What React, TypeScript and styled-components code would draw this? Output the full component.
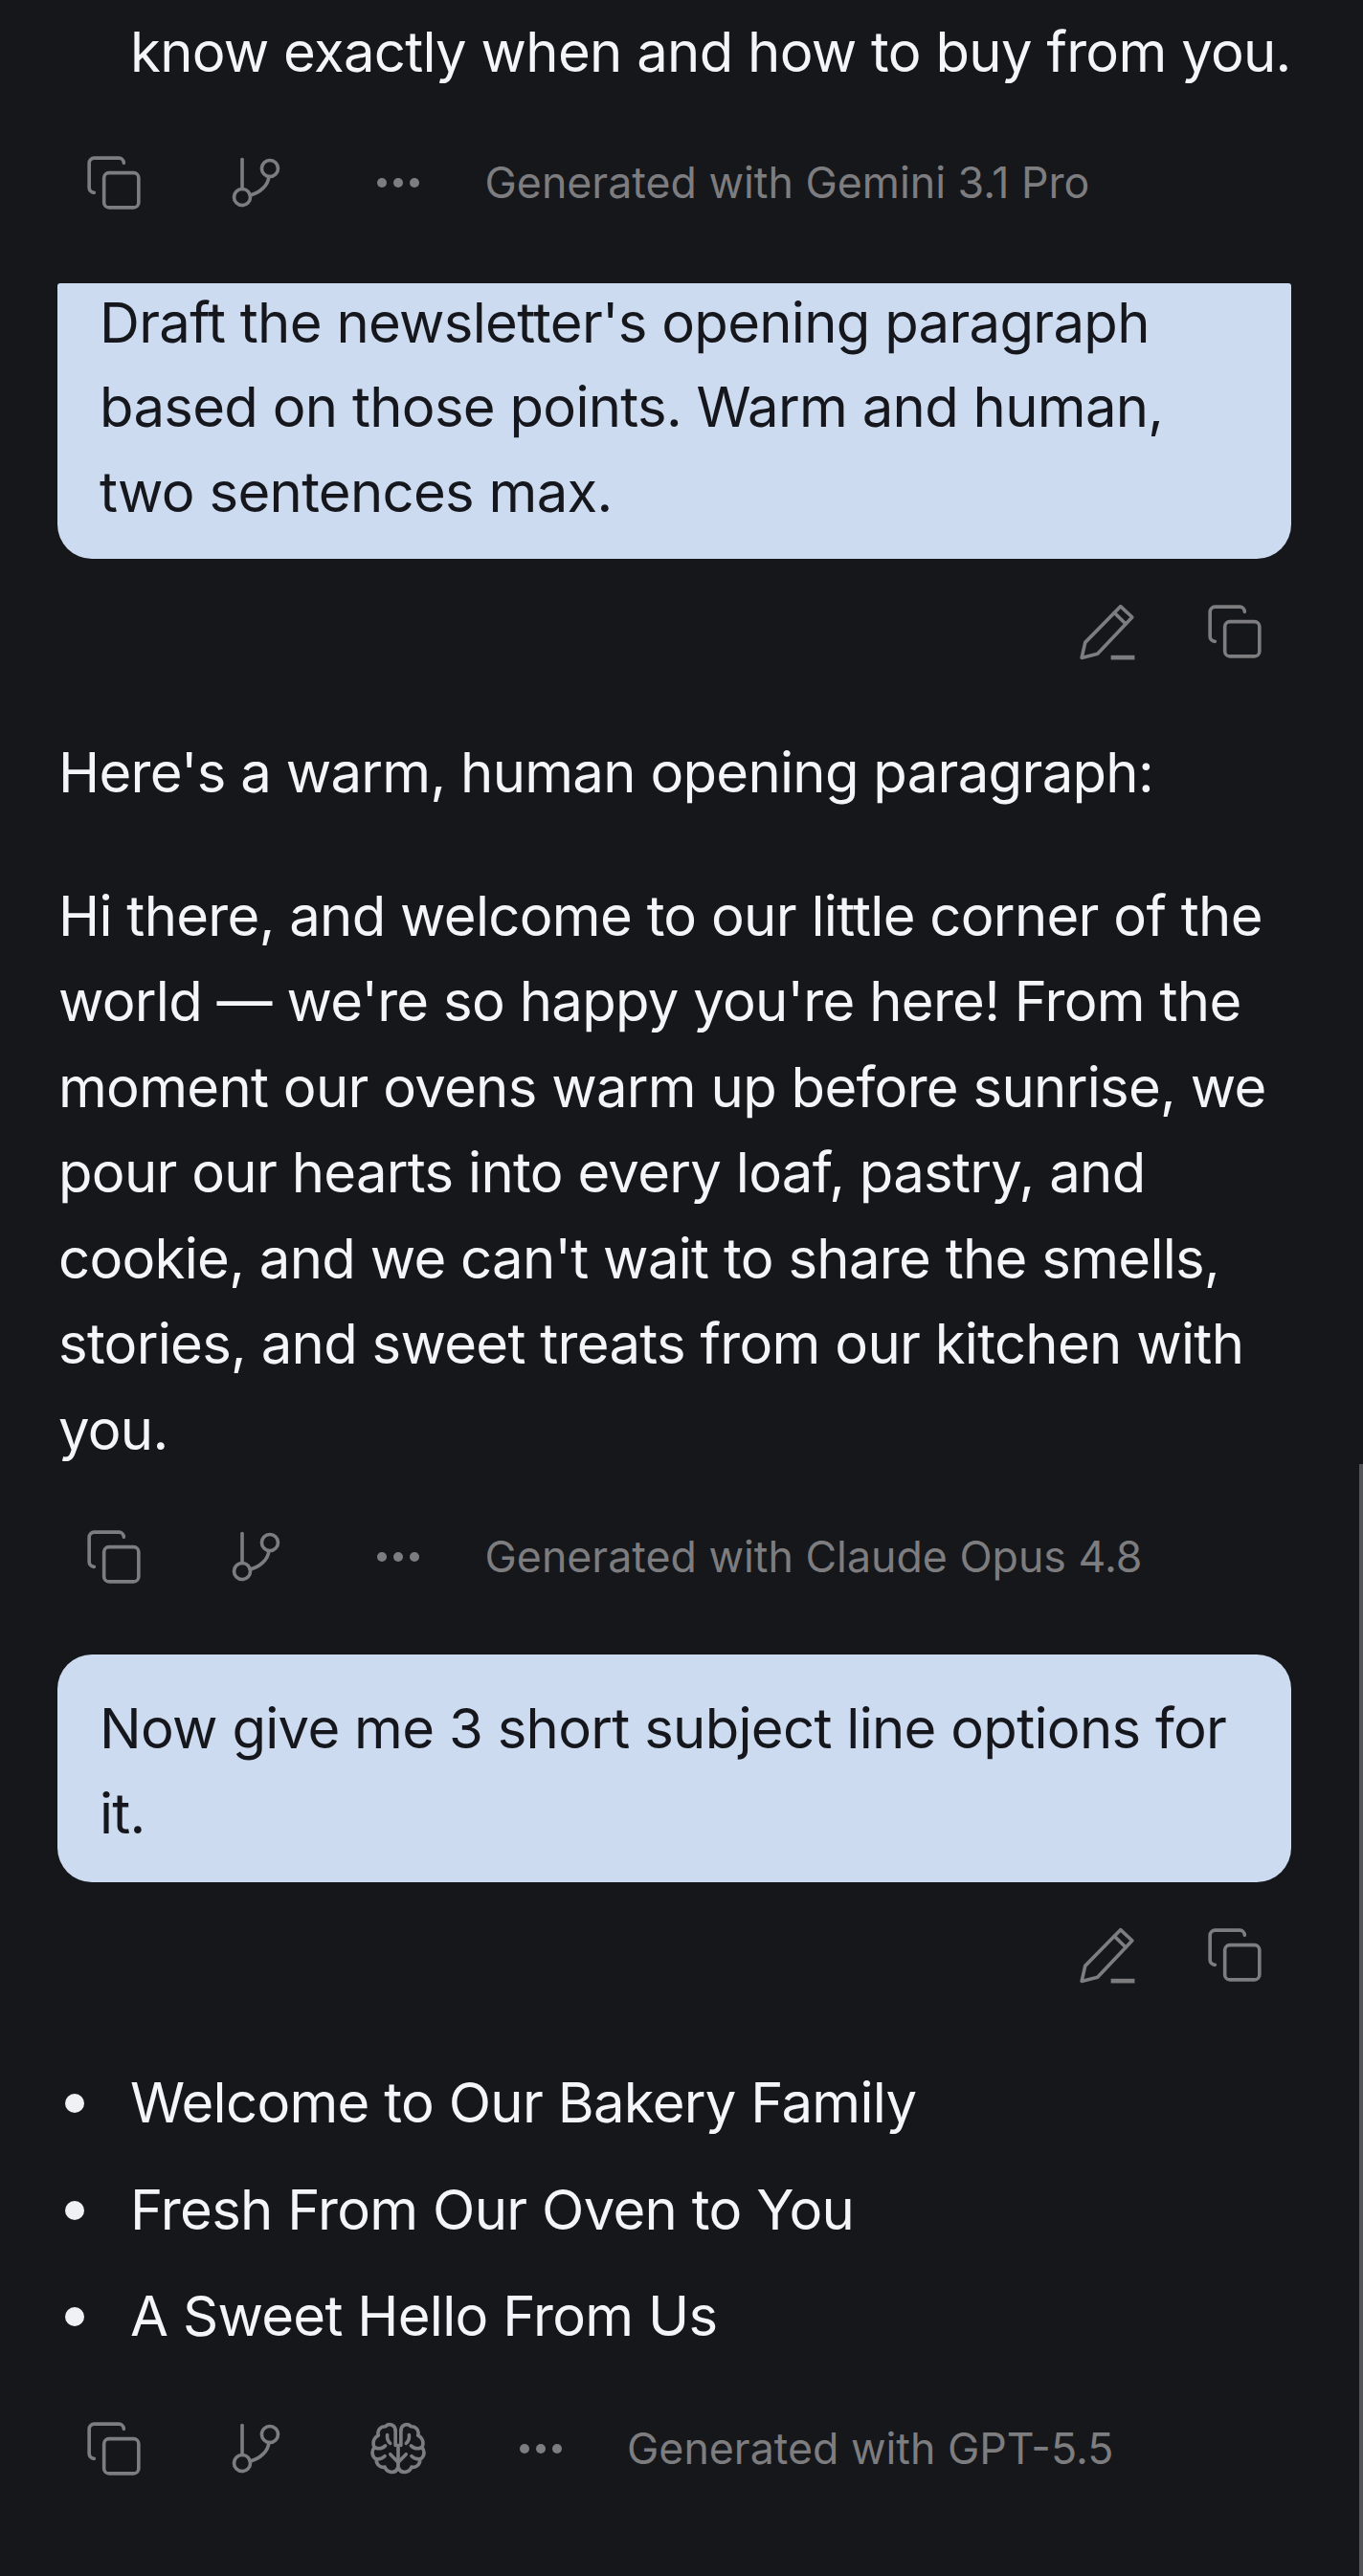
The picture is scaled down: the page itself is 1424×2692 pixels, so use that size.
import { Copy } from "lucide-react";
import styled, { createGlobalStyle } from "styled-components";

const GlobalStyle = createGlobalStyle`
  html, body {
    margin: 0;
    padding: 0;
    background: #16171b;
  }
`;

const Page = styled.div`
  position: relative;
  box-sizing: border-box;
  width: 1424px;
  height: 2692px;
  overflow: hidden;
  background: #16171b;
  color: #f4f5f7;
  font-family: Inter, "Liberation Sans", sans-serif;
  font-size: 58px;
  letter-spacing: -0.7px;
  line-height: 89.5px;
`;

const Thread = styled.div`
  display: flex;
  flex-direction: column;
  padding: 10px 61px 0;
`;

const Paragraph = styled.p<{ $top: number }>`
  margin: 0;
  padding-top: ${(p) => p.$top}px;
`;

const TopLine = styled.p`
  margin: 0 0 0 75px;
  white-space: nowrap;
`;

const Actions = styled.div<{ $top: number }>`
  display: flex;
  align-items: center;
  height: 62px;
  margin: ${(p) => p.$top}px 0 0 -16px;
  color: #7d7d80;
`;

const ActionSlot = styled.div`
  display: flex;
  align-items: center;
  justify-content: center;
  width: 148.5px;
  height: 62px;
`;

const ModelNote = styled.span`
  margin-left: 16px;
  font-size: 44.7px;
  letter-spacing: 0;
  line-height: 62px;
  white-space: nowrap;
`;

const Bubble = styled.div<{ $top: number; $clipped?: boolean }>`
  box-sizing: border-box;
  width: 1289px;
  margin: ${(p) => p.$top}px 0 0 -1px;
  padding: ${(p) => (p.$clipped ? "0 44px 26px" : "33px 44px 28px")};
  border-radius: ${(p) => (p.$clipped ? "3px 3px 36px 36px" : "36px")};
  background: #ccdbf0;
  color: #15171c;
  line-height: 88.5px;
`;

const BubbleText = styled.div<{ $lift?: number }>`
  margin-top: ${(p) => -(p.$lift ?? 0)}px;
`;

const EditRow = styled.div`
  display: flex;
  justify-content: flex-end;
  gap: 71px;
  height: 62px;
  margin-top: 45px;
  padding-right: 42px;
  color: #7d7d80;
`;

const Bullets = styled.ul`
  display: flex;
  flex-direction: column;
  gap: 22px;
  list-style: none;
  margin: 0;
  padding: 79px 0 0 75px;
`;

const Bullet = styled.li`
  position: relative;
  &::before {
    content: "";
    position: absolute;
    left: -68px;
    top: 35px;
    width: 20px;
    height: 20px;
    border-radius: 50%;
    background: #f0f1f4;
  }
`;

const ScrollThumb = styled.div`
  position: absolute;
  right: 0;
  top: 1530px;
  bottom: 0;
  width: 4px;
  background: #545456;
`;

const Glyph = styled.svg`
  display: block;
  overflow: visible;
  fill: none;
  stroke: currentColor;
  stroke-width: 1.4;
  stroke-linecap: round;
  stroke-linejoin: round;
`;

const BranchIcon = () => (
  <Glyph width="62" height="62" viewBox="0 0 24 24">
    <path d="M6.2 2.5v12" />
    <circle cx="6.2" cy="17.8" r="3.3" />
    <circle cx="17.4" cy="6.2" r="3.3" />
    <path d="M17 9.5c-.3 3.5-3.5 6.5-7.6 7.5" />
  </Glyph>
);

const EditIcon = () => (
  <Glyph width="62" height="62" viewBox="0 0 24 24">
    <path d="M17.3 1.8 22 6.2 8 21l-6.4 1.6L3 16.4Z" />
    <path d="m14.8 4.4 4.6 4.5" />
    <path d="M13.4 22.5h9.6" strokeWidth="1.8" strokeLinecap="butt" />
  </Glyph>
);

const brainHalf = (
  <>
    <path d="M10.9 4.6C10.8 2.4 8.2 1.3 6.8 3 4.8 2.9 3.4 4.7 4 6.6 2.2 7.4 1.4 9.6 2.4 11.4 1 13 1.4 15.4 3.2 16.2 3 18.4 4.8 19.8 6.6 19.4 7.4 21.8 11 22.2 11.7 20" />
    <path d="M10.9 4.6V10.6" />
    <path d="M12 17.5 8.8 14.2" />
    <path d="M2.8 11.6c1.6.6 3 .2 4-.8" />
    <path d="M7.6 6.4c-.2 1.4.2 2.6 1.2 3.4" />
    <path d="M3.4 16.2c1.4 0 2.4-.4 3.2-1.2" />
  </>
);

const BrainIcon = () => (
  <Glyph width="62" height="62" viewBox="0 0 24 24">
    {brainHalf}
    <g transform="matrix(-1 0 0 1 24 0)">{brainHalf}</g>
    <path d="M12 10.6v9.8" />
  </Glyph>
);

const Dots = () => (
  <svg width="62" height="62" viewBox="0 0 62 62" fill="currentColor">
    <circle cx="14" cy="31" r="5" />
    <circle cx="31" cy="31" r="5" />
    <circle cx="48" cy="31" r="5" />
  </svg>
);

const icon = { size: 62, strokeWidth: 1.4 };

const MessageActions = ({ note, top, thinking }: { note: string; top: number; thinking?: boolean }) => (
  <Actions $top={top}>
    <ActionSlot>
      <Copy {...icon} />
    </ActionSlot>
    <ActionSlot>
      <BranchIcon />
    </ActionSlot>
    {thinking && (
      <ActionSlot>
        <BrainIcon />
      </ActionSlot>
    )}
    <ActionSlot>
      <Dots />
    </ActionSlot>
    <ModelNote>{note}</ModelNote>
  </Actions>
);

const UserActions = () => (
  <EditRow>
    <EditIcon />
    <Copy {...icon} />
  </EditRow>
);

const App = () => (
  <Page>
    <GlobalStyle />
    <Thread>
      <TopLine>know exactly when and how to buy from you.</TopLine>
      <MessageActions note="Generated with Gemini 3.1 Pro" top={60} />

      <Bubble $top={74} $clipped>
        <BubbleText $lift={3}>
          Draft the newsletter's opening paragraph based on those points. Warm and human, two sentences max.
        </BubbleText>
      </Bubble>
      <UserActions />

      <Paragraph $top={72}>Here's a warm, human opening paragraph:</Paragraph>
      <Paragraph $top={60}>
        Hi there, and welcome to our little corner of the world — we're so happy you're here! From the moment our ovens
        warm up before sunrise, we pour our hearts into every loaf, pastry, and cookie, and we can't wait to share the
        smells, stories, and sweet treats from our kitchen with you.
      </Paragraph>
      <MessageActions note="Generated with Claude Opus 4.8" top={57} />

      <Bubble $top={71}>
        <BubbleText>Now give me 3 short subject line options for it.</BubbleText>
      </Bubble>
      <UserActions />

      <Bullets>
        <Bullet>Welcome to Our Bakery Family</Bullet>
        <Bullet>Fresh From Our Oven to You</Bullet>
        <Bullet>A Sweet Hello From Us</Bullet>
      </Bullets>
      <MessageActions note="Generated with GPT-5.5" top={62} thinking />
    </Thread>
    <ScrollThumb />
  </Page>
);

export default App;
